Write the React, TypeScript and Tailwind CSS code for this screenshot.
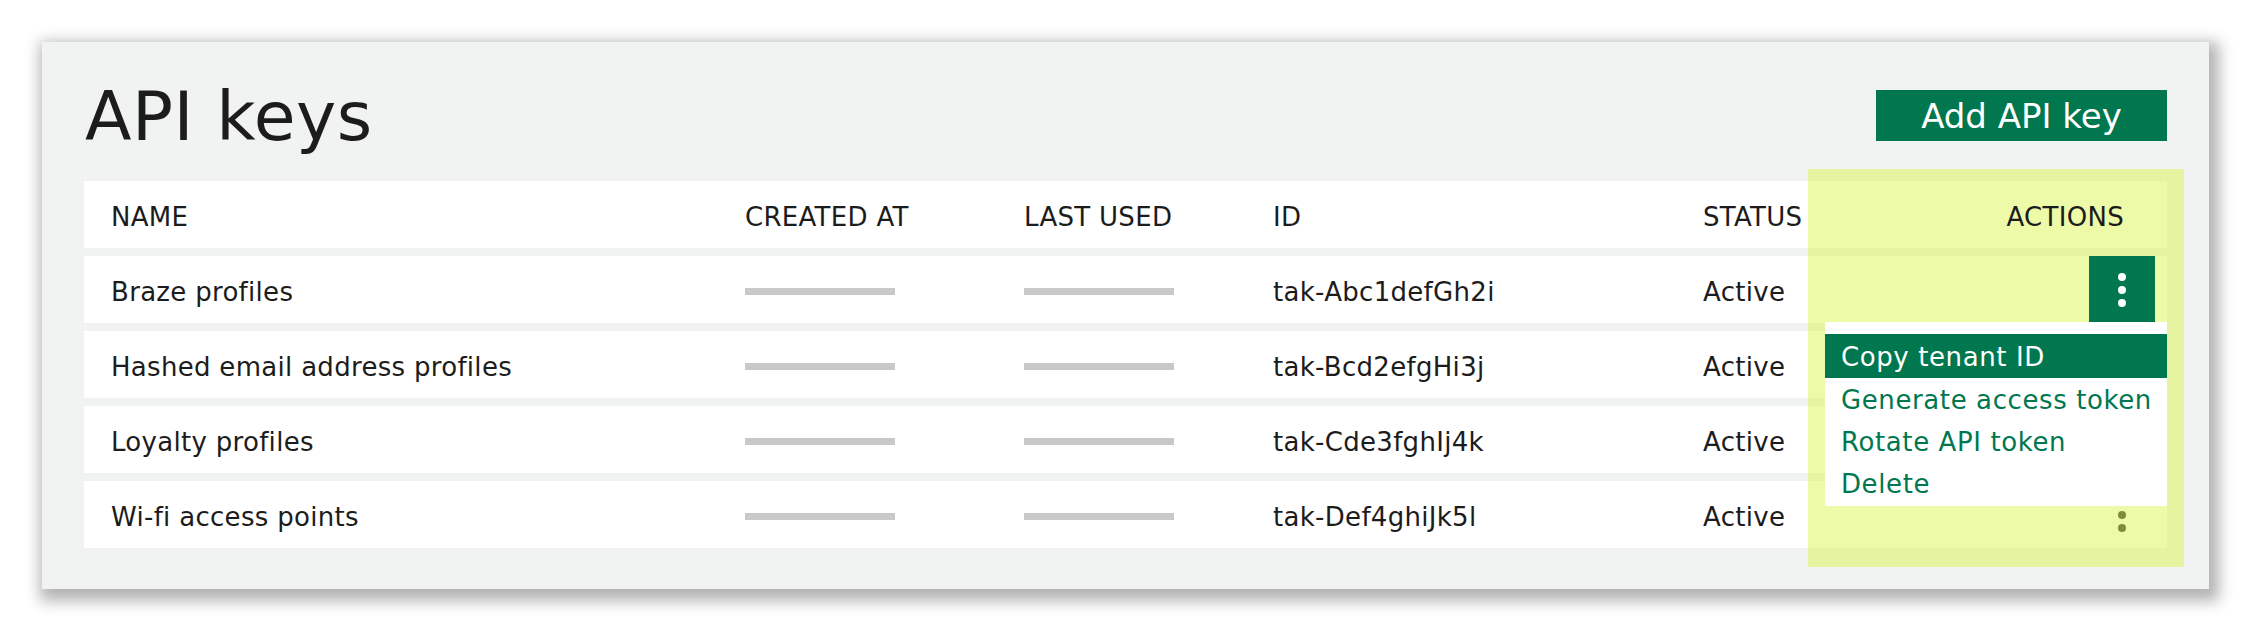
import React from "react";

const rows = [
  { name: "Braze profiles", id: "tak-Abc1defGh2i", status: "Active" },
  { name: "Hashed email address profiles", id: "tak-Bcd2efgHi3j", status: "Active" },
  { name: "Loyalty profiles", id: "tak-Cde3fghIj4k", status: "Active" },
  { name: "Wi-fi access points", id: "tak-Def4ghiJk5l", status: "Active" },
];

const menuItems = ["Copy tenant ID", "Generate access token", "Rotate API token", "Delete"];

// Vertical three-dot icon
const Kebab = ({ light }: { light?: boolean }) => (
  <div className="flex flex-col items-center gap-[5px]">
    {[0, 1, 2].map((i) => (
      <span
        key={i}
        className={`block w-[8px] h-[8px] rounded-full ${light ? "bg-white" : "bg-[#222222]"}`}
      />
    ))}
  </div>
);

const Placeholder = () => <div className="w-[150px] h-[7px] bg-[#c8c8c8]" />;

export default function App() {
  return (
    <div className="min-h-screen bg-white pt-[42px] pl-[42px] font-['DejaVu_Sans',sans-serif] text-[#1c1c1c]">
      <div className="w-[2167px] h-[547px] bg-[#f1f3f2] shadow-[4px_6px_14px_6px_rgba(0,0,0,0.3)] px-[42px] pt-[40px]">
        {/* Header */}
        <div className="flex justify-between items-start h-[99px]">
          <h1 className="text-[68px] leading-[68px] font-normal ml-[1px] mt-[1px] tracking-[0.5px]">API keys</h1>
          <button className="mt-[8px] w-[291px] h-[51px] bg-[#00774f] text-white text-[34px] leading-none flex items-center justify-center">
            Add API key
          </button>
        </div>

        {/* Table */}
        <div className="relative text-[26px] tracking-[0.3px]">
          <div className="flex items-center h-[67px] bg-white pl-[27px]">
            <div className="w-[634px] pt-[6px]">NAME</div>
            <div className="w-[279px] pt-[6px]">CREATED AT</div>
            <div className="w-[249px] pt-[6px]">LAST USED</div>
            <div className="w-[430px] pt-[6px]">ID</div>
            <div className="flex-1 pt-[6px]">STATUS</div>
            <div className="relative z-20 pr-[43px] pt-[6px]">ACTIONS</div>
          </div>

          {rows.map((row, index) => (
            <div key={index} className="flex items-center h-[67px] mt-[8px] bg-white pl-[27px]">
              <div className="w-[634px] pt-[6px]">{row.name}</div>
              <div className="w-[279px] pt-[3px]">
                <Placeholder />
              </div>
              <div className="w-[249px] pt-[3px]">
                <Placeholder />
              </div>
              <div className="w-[430px] pt-[6px]">{row.id}</div>
              <div className="flex-1 pt-[6px]">{row.status}</div>
              {index === 0 ? (
                <div className="relative z-20 w-[66px] h-full mr-[12px]">
                  <button className="w-full h-full bg-[#00774f] flex items-center justify-center">
                    <Kebab light />
                  </button>
                  {/* Dropdown menu */}
                  <div className="absolute top-[66px] right-[-12px] w-[342px] bg-white pt-[12px] pb-[2px] text-[26px] tracking-[0.6px]">
                    {menuItems.map((item, i) => (
                      <div
                        key={item}
                        className={`flex items-center pl-[16px] pt-[2px] ${
                          i === 0 ? "h-[44px] bg-[#00774f] text-white" : "h-[42px] text-[#00774f]"
                        }`}
                      >
                        {item}
                      </div>
                    ))}
                  </div>
                </div>
              ) : (
                <div className="w-[66px] h-full mr-[12px] flex items-center justify-center">
                  <Kebab />
                </div>
              )}
            </div>
          ))}

          {/* Highlight overlay */}
          <div className="absolute -top-[12px] -right-[17px] -bottom-[19px] w-[376px] bg-[#dcf550]/50 z-10 pointer-events-none" />
        </div>
      </div>
    </div>
  );
}
